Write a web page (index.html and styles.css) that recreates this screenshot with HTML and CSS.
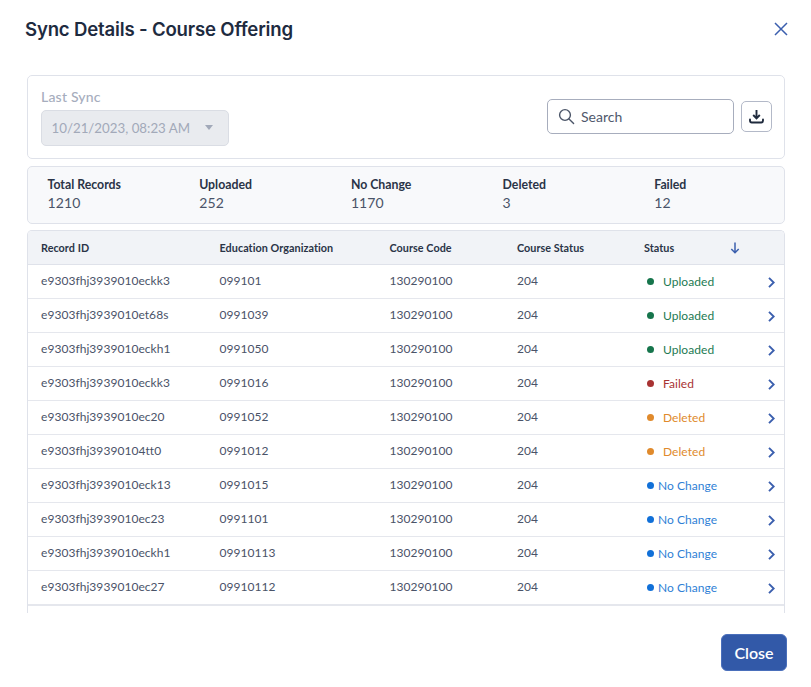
FILE: index.html
```html
<!DOCTYPE html>
<html lang="en">
<head>
<meta charset="utf-8">
<title>Sync Details</title>
<link rel="stylesheet" href="styles.css">
</head>
<body>
<div class="modal">
  <header class="modal-head">
    <h1 class="title">Sync Details - Course Offering</h1>
    <button class="close-x" aria-label="Close">
      <svg width="14" height="14" viewBox="0 0 14 14" fill="none" stroke="#3b5fae" stroke-width="1.5"><path d="M1 1l12 12M13 1L1 13"/></svg>
    </button>
  </header>
  <main class="modal-body">
    <section class="filter-card">
      <div class="sync-field">
        <div class="sync-label">Last Sync</div>
        <div class="sync-select"><span>10/21/2023, 08:23 AM</span><i class="caret"></i></div>
      </div>
      <div class="tools">
        <div class="search">
          <svg width="17" height="17" viewBox="0 0 17 17" fill="none" stroke="#4b5568" stroke-width="1.4"><circle cx="7" cy="7" r="5.4"/><path d="M11 11l4.600 4.600" stroke-linecap="round"/></svg>
          <span>Search</span>
        </div>
        <button class="download" aria-label="Download">
          <svg width="15" height="15" viewBox="0 0 15 15" fill="none" stroke="#1f2a3d" stroke-width="1.9"><path d="M7.500 1v8M4.200 6l3.300 3.300L10.800 6"/><path d="M1 10.500v1.100c0 1 .7 1.900 1.800 1.900h9.400c1.100 0 1.800-.9 1.800-1.900v-1.100" stroke-linecap="round"/></svg>
        </button>
      </div>
    </section>
    <section class="stats">
      <div class="stat"><div class="stat-k">Total Records</div><div class="stat-v">1210</div></div>
      <div class="stat"><div class="stat-k">Uploaded</div><div class="stat-v">252</div></div>
      <div class="stat"><div class="stat-k">No Change</div><div class="stat-v">1170</div></div>
      <div class="stat"><div class="stat-k">Deleted</div><div class="stat-v">3</div></div>
      <div class="stat"><div class="stat-k">Failed</div><div class="stat-v">12</div></div>
    </section>
    <section class="table-wrap">
      <div class="row head">
        <div>Record ID</div><div>Education Organization</div><div>Course Code</div><div>Course Status</div>
        <div class="status-head">Status<svg width="10" height="12" viewBox="0 0 10 12" fill="none" stroke="#3b5fae" stroke-width="1.5"><path d="M5 .5v10M1.300 7L5 10.700 8.700 7"/></svg></div>
        <div></div>
      </div>
      <div class="row"><div>e9303fhj3939010eckk3</div><div>099101</div><div>130290100</div><div>204</div><div class="st up">Uploaded</div><div class="chev"><svg width="7" height="11" viewBox="0 0 7 11"><path d="M1 .8l4.700 4.700L1 10.200"/></svg></div></div>
      <div class="row"><div>e9303fhj3939010et68s</div><div>0991039</div><div>130290100</div><div>204</div><div class="st up">Uploaded</div><div class="chev"><svg width="7" height="11" viewBox="0 0 7 11"><path d="M1 .8l4.700 4.700L1 10.200"/></svg></div></div>
      <div class="row"><div>e9303fhj3939010eckh1</div><div>0991050</div><div>130290100</div><div>204</div><div class="st up">Uploaded</div><div class="chev"><svg width="7" height="11" viewBox="0 0 7 11"><path d="M1 .8l4.700 4.700L1 10.200"/></svg></div></div>
      <div class="row"><div>e9303fhj3939010eckk3</div><div>0991016</div><div>130290100</div><div>204</div><div class="st fail">Failed</div><div class="chev"><svg width="7" height="11" viewBox="0 0 7 11"><path d="M1 .8l4.700 4.700L1 10.200"/></svg></div></div>
      <div class="row"><div>e9303fhj3939010ec20</div><div>0991052</div><div>130290100</div><div>204</div><div class="st del">Deleted</div><div class="chev"><svg width="7" height="11" viewBox="0 0 7 11"><path d="M1 .8l4.700 4.700L1 10.200"/></svg></div></div>
      <div class="row"><div>e9303fhj39390104tt0</div><div>0991012</div><div>130290100</div><div>204</div><div class="st del">Deleted</div><div class="chev"><svg width="7" height="11" viewBox="0 0 7 11"><path d="M1 .8l4.700 4.700L1 10.200"/></svg></div></div>
      <div class="row"><div>e9303fhj3939010eck13</div><div>0991015</div><div>130290100</div><div>204</div><div class="st nc">No Change</div><div class="chev"><svg width="7" height="11" viewBox="0 0 7 11"><path d="M1 .8l4.700 4.700L1 10.200"/></svg></div></div>
      <div class="row"><div>e9303fhj3939010ec23</div><div>0991101</div><div>130290100</div><div>204</div><div class="st nc">No Change</div><div class="chev"><svg width="7" height="11" viewBox="0 0 7 11"><path d="M1 .8l4.700 4.700L1 10.200"/></svg></div></div>
      <div class="row"><div>e9303fhj3939010eckh1</div><div>09910113</div><div>130290100</div><div>204</div><div class="st nc">No Change</div><div class="chev"><svg width="7" height="11" viewBox="0 0 7 11"><path d="M1 .8l4.700 4.700L1 10.200"/></svg></div></div>
      <div class="row last"><div>e9303fhj3939010ec27</div><div>09910112</div><div>130290100</div><div>204</div><div class="st nc">No Change</div><div class="chev"><svg width="7" height="11" viewBox="0 0 7 11"><path d="M1 .8l4.700 4.700L1 10.200"/></svg></div></div>
    </section>
  </main>
  <footer class="modal-foot"><button class="close-btn">Close</button></footer>
</div>
</body>
</html>
```

FILE: styles.css
```css
* { box-sizing: border-box; }
html, body { margin: 0; height: 100%; }
body {
  background: #fff;
  color: #4a5368;
  font-family: Lato, "Noto Sans", sans-serif;
  overflow: hidden;
}
button { font-family: inherit; cursor: pointer; }
.modal { width: 811px; height: 687px; display: flex; flex-direction: column; }
.modal-head {
  height: 75px;
  flex: none;
  display: flex;
  justify-content: space-between;
  padding: 16px 23px 0 25px;
}
.title {
  margin: 0;
  font: 600 18.600px/26px Inter, sans-serif;
  letter-spacing: -0.18px;
  color: #1e2b3f;
}
.close-x { border: 0; background: none; padding: 0; height: 26px; display: flex; align-items: center; }
.modal-body {
  flex: 1;
  min-height: 0;
  margin: 0 26px 0 27px;
  display: flex;
  flex-direction: column;
  gap: 7px;
  overflow: hidden;
}
.filter-card {
  flex: none;
  height: 84px;
  border: 1px solid #dfe2ea;
  border-radius: 5px;
  display: flex;
  justify-content: space-between;
  align-items: center;
  padding: 0 13px;
}
.sync-label { font-size: 14px; line-height: 16px; font-weight: 500; letter-spacing: 0.2px; color: #a6adbd; margin: 0 0 5px; }
.sync-select {
  width: 188px;
  height: 36px;
  background: #e9ebef;
  border: 1px solid #dadde4;
  border-radius: 5px;
  display: flex;
  align-items: center;
  justify-content: space-between;
  padding: 0 15px 0 9.500px;
  font-size: 13.300px;
  color: #a2a9b9;
}
.caret { width: 0; height: 0; border: 4.500px solid transparent; border-top: 5px solid #a2a9b9; border-bottom: 0; }
.tools { display: flex; align-items: center; gap: 7px; margin: -1px -1px 0 0; }
.search {
  width: 187px;
  height: 35px;
  border: 1px solid #a7adbd;
  border-radius: 5px;
  display: flex;
  align-items: center;
  gap: 6px;
  padding: 0 10px;
  font-size: 14px;
  color: #4f586c;
}
.download {
  width: 31px;
  height: 31px;
  border: 1px solid #b3b9c8;
  border-radius: 5px;
  background: #fff;
  padding: 0;
  display: flex;
  align-items: center;
  justify-content: center;
}
.stats {
  flex: none;
  height: 58px;
  background: #f8f9fb;
  border: 1px solid #dfe2ea;
  border-radius: 5px;
  display: grid;
  grid-template-columns: repeat(5, 151.700px);
  padding: 9px 0 0 19.500px;
}
.stat-k { font-size: 12.300px; line-height: 17px; font-weight: 700; color: #2a3447; }
.stat-v { font-size: 14px; line-height: 20px; letter-spacing: 0.1px; color: #4a5368; }
.table-wrap {
  flex: 1;
  min-height: 0;
  margin: -1px 0 0 -0.500px;
  border: 1px solid #dfe2ea;
  border-bottom: 0;
  border-radius: 5px 5px 0 0;
  overflow: hidden;
}
.row {
  display: grid;
  grid-template-columns: 178.500px 170px 127.500px 127px 1fr 16px;
  align-items: center;
  height: 34px;
  padding-left: 13.500px;
  padding-bottom: 2px;
  border-bottom: 1px solid #e5e7ed;
  font-size: 12px;
  letter-spacing: 0.05px;
  color: #4a5368;
}
.row.last { border-bottom-width: 2px; height: 35px; }
.head {
  height: 34px;
  padding-bottom: 0;
  background: #f1f3f7;
  border-bottom-color: #dfe2ea;
  font-size: 10.800px;
  font-weight: 700;
  color: #2a3447;
}
.status-head { display: flex; align-items: center; justify-content: space-between; padding-right: 28px; }
.st { display: flex; align-items: center; gap: 9px; padding-left: 3px; font-size: 12px; position: relative; top: 1px; }
.st::before { content: ""; width: 7px; height: 7px; border-radius: 50%; background: currentColor; flex: none; }
.up { color: #1d7a52; }
.up::before { background: #16754c; }
.fail { color: #a83232; }
.del { color: #e08a2c; }
.nc { color: #2f7fd6; gap: 4px; }
.nc::before { background: #1170d8; }
.chev { display: flex; align-items: center; position: relative; top: 2px; }
.chev svg { fill: none; stroke: #3b5fae; stroke-width: 1.9; }
.modal-foot {
  flex: none;
  height: 74px;
  display: flex;
  justify-content: flex-end;
  align-items: flex-start;
  padding: 21px 24px 0 0;
}
.close-btn {
  width: 66px;
  height: 37px;
  border: 1px solid #4a6fbb;
  border-radius: 6px;
  background: #3259a8;
  color: #fff;
  font-size: 16px;
  font-weight: 600;
}
```
